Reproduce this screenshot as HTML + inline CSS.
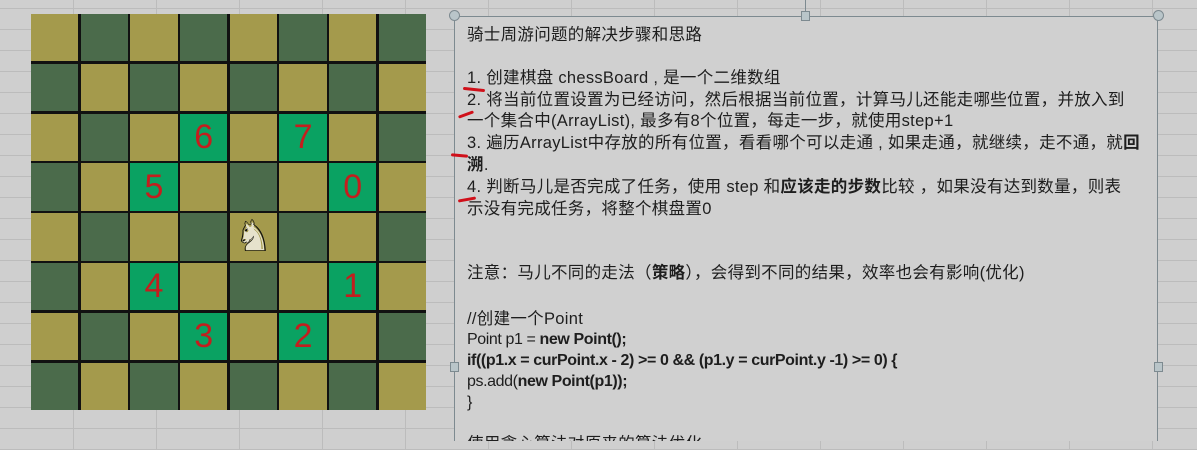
<!DOCTYPE html>
<html><head><meta charset="utf-8"><style>
body{margin:0;width:1197px;height:450px;overflow:hidden;background:#cfcfcf;position:relative;font-family:"Liberation Sans","Noto Sans CJK SC",sans-serif;
background-image:linear-gradient(#bcbcbc 1px,transparent 1px),linear-gradient(90deg,#bcbcbc 1px,transparent 1px);background-size:100% 21px,83px 100%;background-position:0 8px,73px 0;}
.board{position:absolute;left:31px;top:14px;width:395px;height:396px;background:#111;display:grid;grid-template-columns:repeat(8,1fr);grid-template-rows:repeat(8,1fr);gap:2.5px;box-sizing:border-box;}
.c{display:flex;align-items:center;justify-content:center;color:#c41e1e;font-size:34px;font-family:"Liberation Sans",sans-serif;position:relative}
.o{background:#a49a4c}.d{background:#4b6b4b}.g{background:#0aa262}
.box{position:absolute;left:454px;top:16px;width:704px;height:425px;border:1.5px solid #7d8a90;border-bottom:none;background:#d0d0d0;box-sizing:border-box;overflow:hidden;}
.t{position:absolute;left:12px;font-size:16.5px;line-height:20px;color:#1e1e1e;white-space:nowrap;letter-spacing:0.3px}
.k{font-size:16px;letter-spacing:-0.4px}
b{font-weight:bold}
.h{position:absolute;width:9px;height:9px;border:1px solid #7d8a90;background:#b9c5c9;border-radius:50%}
.s{position:absolute;width:7px;height:8px;border:1px solid #7d8a90;background:#b9c5c9}
.r{position:absolute;height:3px;background:#d0101a;border-radius:2px}
.kn{position:absolute;left:0;right:0;top:2px;text-align:center;font-size:44px;line-height:44px;font-family:"DejaVu Sans",sans-serif}
</style></head><body>
<div class="board">
<div class="c o"></div><div class="c d"></div><div class="c o"></div><div class="c d"></div><div class="c o"></div><div class="c d"></div><div class="c o"></div><div class="c d"></div>
<div class="c d"></div><div class="c o"></div><div class="c d"></div><div class="c o"></div><div class="c d"></div><div class="c o"></div><div class="c d"></div><div class="c o"></div>
<div class="c o"></div><div class="c d"></div><div class="c o"></div><div class="c g">6</div><div class="c o"></div><div class="c g">7</div><div class="c o"></div><div class="c d"></div>
<div class="c d"></div><div class="c o"></div><div class="c g">5</div><div class="c o"></div><div class="c d"></div><div class="c o"></div><div class="c g">0</div><div class="c o"></div>
<div class="c o"></div><div class="c d"></div><div class="c o"></div><div class="c d"></div><div class="c o"><span class="kn" style="color:#e6e2cc;font-size:38px">♞</span><span class="kn" style="color:#111">♘</span></div><div class="c d"></div><div class="c o"></div><div class="c d"></div>
<div class="c d"></div><div class="c o"></div><div class="c g">4</div><div class="c o"></div><div class="c d"></div><div class="c o"></div><div class="c g">1</div><div class="c o"></div>
<div class="c o"></div><div class="c d"></div><div class="c o"></div><div class="c g">3</div><div class="c o"></div><div class="c g">2</div><div class="c o"></div><div class="c d"></div>
<div class="c d"></div><div class="c o"></div><div class="c d"></div><div class="c o"></div><div class="c d"></div><div class="c o"></div><div class="c d"></div><div class="c o"></div>
</div>
<div class="box">
<div class="t" style="top:8px">骑士周游问题的解决步骤和思路</div>
<div class="t" style="top:51px">1. 创建棋盘 chessBoard , 是一个二维数组</div>
<div class="t" style="top:73px">2. 将当前位置设置为已经访问，然后根据当前位置，计算马儿还能走哪些位置，并放入到</div>
<div class="t" style="top:94px">一个集合中(ArrayList), 最多有8个位置，每走一步，就使用step+1</div>
<div class="t" style="top:116px">3. 遍历ArrayList中存放的所有位置，看看哪个可以走通 , 如果走通，就继续，走不通，就<b>回</b></div>
<div class="t" style="top:138px"><b>溯</b>.</div>
<div class="t" style="top:160px">4. 判断马儿是否完成了任务，使用 step 和<b>应该走的步数</b>比较 ，如果没有达到数量，则表</div>
<div class="t" style="top:182px">示没有完成任务，将整个棋盘置0</div>
<div class="t" style="top:246px">注意：马儿不同的走法（<b>策略</b>），会得到不同的结果，效率也会有影响(优化)</div>
<div class="t" style="top:292px">//创建一个Point</div>
<div class="t k" style="top:313px">Point p1 = <b>new Point();</b></div>
<div class="t k" style="top:334px"><b>if((p1.x = curPoint.x - 2) &gt;= 0 &amp;&amp; (p1.y = curPoint.y -1) &gt;= 0) {</b></div>
<div class="t k" style="top:355px">ps.add(<b>new Point(p1));</b></div>
<div class="t k" style="top:376px">}</div>
<div class="t" style="top:417px">使用贪心算法对原来的算法优化</div>
</div>
<div class="h" style="left:449px;top:10px"></div>
<div class="h" style="left:1153px;top:10px"></div>
<div class="s" style="left:801px;top:11px"></div>
<div style="position:absolute;left:805px;top:0;width:1px;height:11px;background:#7d8a90"></div>
<div class="s" style="left:450px;top:362px"></div>
<div class="s" style="left:1154px;top:362px"></div>
<div class="r" style="left:463px;top:88px;width:22px;transform:rotate(6deg)"></div>
<div class="r" style="left:458px;top:113px;width:16px;transform:rotate(-20deg)"></div>
<div class="r" style="left:451px;top:154px;width:17px;transform:rotate(5deg)"></div>
<div class="r" style="left:458px;top:198px;width:18px;transform:rotate(-10deg)"></div>
</body></html>
